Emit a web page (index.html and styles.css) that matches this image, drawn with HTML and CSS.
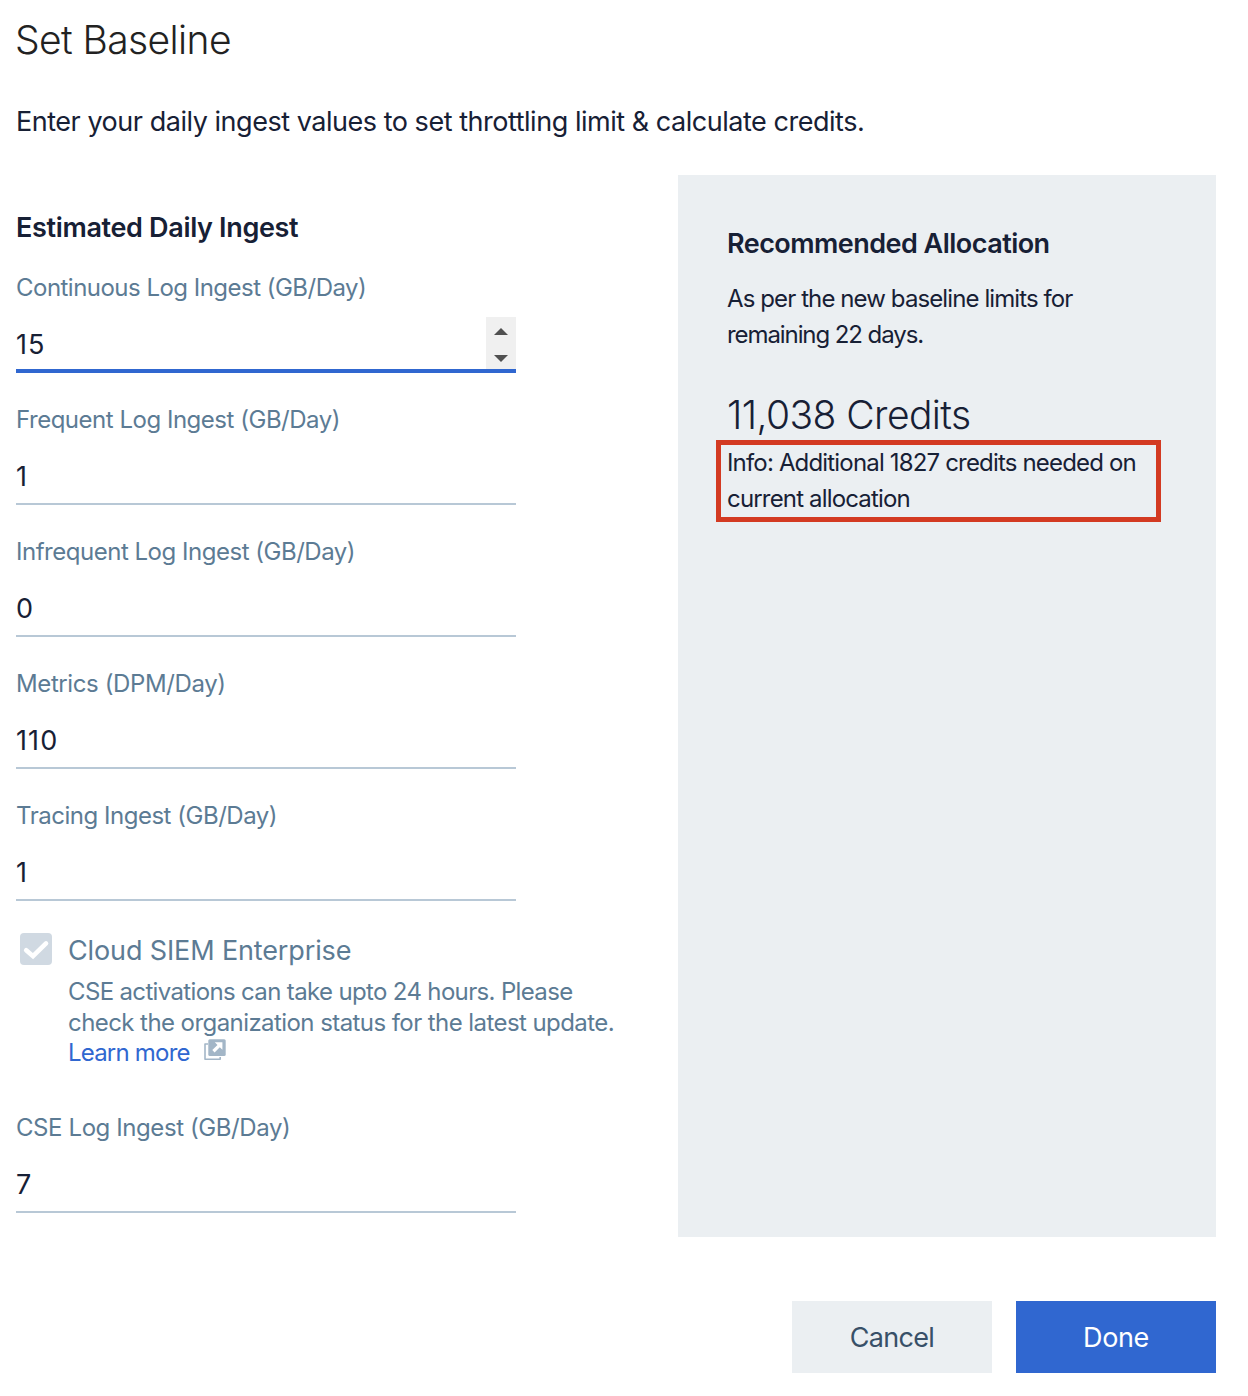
FILE: index.html
```html
<!DOCTYPE html>
<html lang="en">
<head>
<meta charset="utf-8">
<title>Set Baseline</title>
<link rel="stylesheet" href="styles.css">
</head>
<body>
<main class="dialog">
  <h1 class="title">Set Baseline</h1>
  <p class="intro">Enter your daily ingest values to set throttling limit &amp; calculate credits.</p>
  <div class="columns">
    <form class="ingest">
      <h2 class="heading heading-ingest">Estimated Daily Ingest</h2>
      <div class="fields">
        <div class="field">
          <label class="label label-continuous" for="continuous">Continuous Log Ingest (GB/Day)</label>
          <div class="control control-focused">
            <input class="input" id="continuous" type="text" value="15">
            <div class="spinner">
              <svg class="arrow" viewBox="0 0 14 7"><path d="M0 7 7 0l7 7z"/></svg>
              <svg class="arrow" viewBox="0 0 14 7"><path d="M0 0h14L7 7z"/></svg>
            </div>
          </div>
        </div>
        <div class="field">
          <label class="label" for="frequent">Frequent Log Ingest (GB/Day)</label>
          <div class="control"><input class="input" id="frequent" type="text" value="1"></div>
        </div>
        <div class="field">
          <label class="label" for="infrequent">Infrequent Log Ingest (GB/Day)</label>
          <div class="control"><input class="input" id="infrequent" type="text" value="0"></div>
        </div>
        <div class="field">
          <label class="label label-metrics" for="metrics">Metrics (DPM/Day)</label>
          <div class="control"><input class="input" id="metrics" type="text" value="110"></div>
        </div>
        <div class="field">
          <label class="label" for="tracing">Tracing Ingest (GB/Day)</label>
          <div class="control"><input class="input" id="tracing" type="text" value="1"></div>
        </div>
      </div>
      <div class="siem">
        <svg class="checkbox" viewBox="0 0 32 32" role="img" aria-label="Checked">
          <rect width="32" height="32" rx="4" fill="#d0d9e2"/>
          <path d="M6.2 17.2 13 23.2 26 10.4" fill="none" stroke="#fff" stroke-width="4.6" stroke-linecap="round" stroke-linejoin="miter"/>
        </svg>
        <div class="siem-body">
          <div class="siem-title">Cloud SIEM Enterprise</div>
          <p class="siem-text"><span class="siem-first">CSE activations can take upto 24 hours. Please</span><br>check the organization status for the latest update.<br><a class="link" href="#">Learn more</a><svg class="external" viewBox="0 0 22 22">
            <path d="M4 5H1v15.2h15.2V18" fill="none" stroke="#a3b6c7" stroke-width="1.6" stroke-linejoin="round"/>
            <rect x="4.3" y="0.3" width="17.4" height="16.8" rx="1.5" fill="#a3b6c7"/>
            <path d="M10.8 3.2h7.6v7.6l-2.6-2.6-5.2 5.2-2.3-2.3 5.2-5.2z" fill="#fff"/>
          </svg></p>
        </div>
      </div>
      <div class="field">
        <label class="label label-cse" for="cse">CSE Log Ingest (GB/Day)</label>
        <div class="control"><input class="input" id="cse" type="text" value="7"></div>
      </div>
    </form>
    <aside class="allocation">
      <h2 class="heading heading-allocation">Recommended Allocation</h2>
      <p class="note"><span class="note-first">As per the new baseline limits for</span><br>remaining 22 days.</p>
      <div class="credits">11,038 Credits</div>
      <p class="info">Info: Additional 1827 credits needed on<br>current allocation</p>
    </aside>
  </div>
  <footer class="actions">
    <button class="button button-cancel" type="button">Cancel</button>
    <button class="button button-done" type="button">Done</button>
  </footer>
</main>
</body>
</html>
```
FILE: styles.css
```css
* { box-sizing: border-box; }
body {
  margin: 0;
  background: #fff;
  color: #172035;
  font-family: Inter, "Liberation Sans", sans-serif;
}
h1, h2, p { margin: 0; }
.dialog { padding: 12px 32px 0 16px; white-space: nowrap; }
.title { margin-left: -1px; font-size: 39px; line-height: 56px; font-weight: 300; letter-spacing: -0.6px; color: #222; }
.intro { margin-top: 36px; font-size: 27px; line-height: 36px; letter-spacing: -0.47px; }
.columns { display: flex; justify-content: space-between; margin-top: 35px; }
.ingest { width: 620px; padding-top: 35px; }
.heading { font-size: 27px; line-height: 36px; font-weight: 600; }
.heading-ingest { letter-spacing: -0.34px; }
.heading-allocation { letter-spacing: -0.53px; }
.fields { display: flex; flex-direction: column; gap: 31px; margin-top: 26px; }
.field { width: 500px; }
.label { display: block; font-size: 24px; line-height: 32px; letter-spacing: -0.48px; color: #5c7b94; }
.label-continuous { letter-spacing: -0.52px; }
.label-metrics { letter-spacing: -0.39px; }
.label-cse { letter-spacing: -0.41px; }
.control { display: flex; height: 56px; margin-top: 13px; border-bottom: 2px solid #b8c8d6; }
.control-focused { border-bottom: 4px solid #3067d0; }
.input {
  flex: 1;
  min-width: 0;
  height: 36px;
  margin-top: 10px;
  padding: 0;
  border: 0;
  outline: 0;
  background: none;
  color: inherit;
  font: 27px/36px Inter, "Liberation Sans", sans-serif;
  letter-spacing: 1.1px;
}
.spinner {
  display: flex;
  flex-direction: column;
  justify-content: space-between;
  align-items: center;
  width: 30px;
  padding: 11px 0 7px;
  background: #f0f0f0;
}
.arrow { width: 14px; height: 7px; fill: #505050; }
.siem { display: flex; gap: 16px; margin: 32px 0 43px; padding-left: 4px; color: #5c7b94; }
.checkbox { flex: none; width: 32px; height: 32px; }
.siem-title { font-size: 27px; line-height: 36px; letter-spacing: -0.13px; }
.siem-text { margin-top: 8px; font-size: 24px; line-height: 30.5px; letter-spacing: -0.57px; }
.siem-first { letter-spacing: -0.65px; }
.link { color: #3067d0; text-decoration: none; letter-spacing: -0.8px; }
.external { width: 22px; height: 22px; margin-left: 14px; vertical-align: 0; }
.allocation { width: 538px; height: 1062px; padding: 51px 0 0 49px; background: #ebeff2; }
.note { margin-top: 19px; font-size: 24px; line-height: 36px; letter-spacing: -1.08px; }
.note-first { letter-spacing: -0.9px; }
.credits { margin-top: 34px; font-size: 39px; line-height: 56px; font-weight: 300; letter-spacing: -0.57px; }
.info {
  width: 445px;
  height: 82px;
  margin: -3px 0 0 -11px;
  padding-left: 6px;
  border: 5px solid #d33a22;
  font-size: 24px;
  line-height: 36px;
  letter-spacing: -0.83px;
}
.actions { display: flex; justify-content: flex-end; gap: 24px; margin-top: 64px; }
.button { width: 200px; height: 72px; padding: 2px 0 0; border: 0; font: 27px/36px Inter, "Liberation Sans", sans-serif; }
.button-cancel { background: #ebeff2; color: #385068; letter-spacing: -0.7px; }
.button-done { background: #3067d0; color: #fff; letter-spacing: -0.4px; }
```
